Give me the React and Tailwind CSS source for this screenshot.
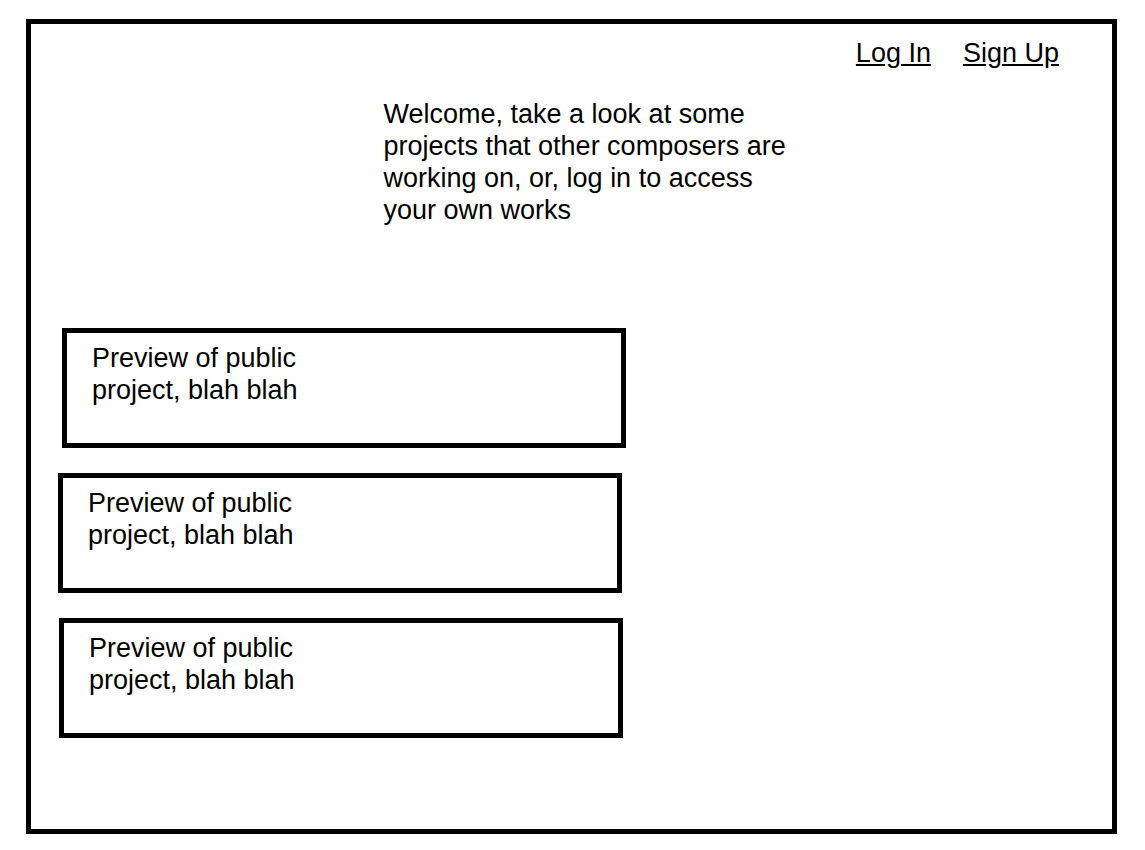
const previews = [
  { id: 1, indent: 'ml-[31px]' },
  { id: 2, indent: 'ml-[27px]' },
  { id: 3, indent: 'ml-7' },
];

function ProjectPreview({ indent }) {
  return (
    <li className={`${indent} min-h-[120px] w-full max-w-[564px] border-5 border-black px-[25px] pt-[9px]`}>
      <p className="max-w-[230px]">Preview of public project, blah blah</p>
    </li>
  );
}

export default function App() {
  return (
    <div className="flex min-h-screen flex-col bg-white pt-[19px] pr-7 pb-4 pl-[26px] font-['Liberation_Sans',Arial,sans-serif] text-[27px] leading-8 text-black">
      <div className="flex grow flex-col border-5 border-black">
        <nav aria-label="Account" className="flex justify-end gap-8 pt-[13px] pr-[53px]">
          <a href="#login" className="underline">Log In</a>
          <a href="#signup" className="underline">Sign Up</a>
        </nav>
        <main>
          <p className="mx-auto mt-[29px] max-w-[464px] pl-11">
            Welcome, take a look at some projects that other composers are working on, or, log in to access your own works
          </p>
          <ul className="mt-[102px] flex flex-col gap-[25px]">
            {previews.map((preview) => (
              <ProjectPreview key={preview.id} indent={preview.indent} />
            ))}
          </ul>
        </main>
      </div>
    </div>
  );
}
